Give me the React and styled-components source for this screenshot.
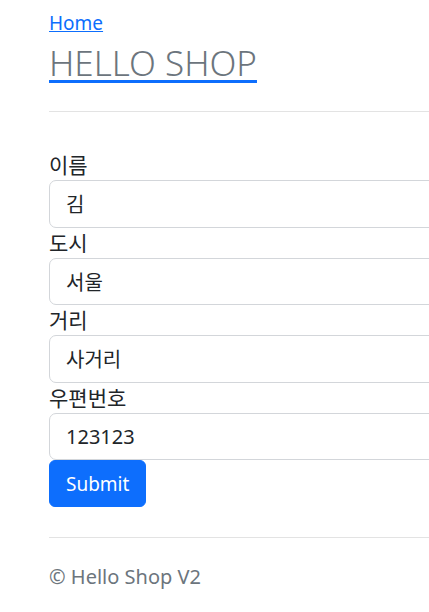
import React from 'react';
import styled, { createGlobalStyle } from 'styled-components';

const GlobalStyle = createGlobalStyle`
  html, body {
    margin: 0;
    padding: 0;
    background: #fff;
    overflow: hidden;
  }
  body {
    font-family: "Noto Sans", "Noto Sans CJK KR", sans-serif;
    font-size: 16px;
    line-height: 1.5;
    color: #212529;
  }
  * {
    box-sizing: border-box;
  }
`;

const Page = styled.div`
  width: 720px;
  padding: 8px 0 0 49px;
`;

const Header = styled.header`
  display: flex;
  flex-direction: column;
  align-items: flex-start;
`;

const HomeLink = styled.a`
  font-size: 19px;
  line-height: 30px;
  color: #0d6efd;
  text-decoration: underline;
`;

const Brand = styled.a`
  font-size: 35px;
  font-weight: 300;
  line-height: 50px;
  color: #6c757d;
  text-decoration: underline;
  text-decoration-color: #0d6efd;
  text-decoration-thickness: 3px;
  text-underline-offset: 4px;
`;

const Rule = styled.hr`
  border: 0;
  border-top: 1px solid #e3e3e3;
  margin: ${(p) => p.$margin || '0'};
`;

const Form = styled.form`
  display: flex;
  flex-direction: column;
  align-items: flex-start;
`;

const Field = styled.div`
  display: flex;
  flex-direction: column;
  width: 100%;
`;

const Label = styled.label`
  font-size: 21px;
  line-height: 30px;
  color: #212529;
`;

const Input = styled.input`
  width: 100%;
  height: 47.5px;
  padding: 8px 16px;
  font-family: inherit;
  font-size: 20px;
  color: #212529;
  background: #fff;
  border: 1px solid #d3d6da;
  border-radius: 7px;
  outline: none;
`;

const SubmitButton = styled.button`
  height: 47px;
  padding: 0 16px;
  font-family: inherit;
  font-size: 19px;
  color: #fff;
  background: #0d6efd;
  border: 1px solid #0d6efd;
  border-radius: 6px;
  cursor: pointer;
`;

const Footer = styled.footer`
  font-size: 20px;
  line-height: 30px;
  color: #6c757d;
  padding-top: 24px;
`;

const fields = [
  { id: 'name', label: '이름', value: '김' },
  { id: 'city', label: '도시', value: '서울' },
  { id: 'street', label: '거리', value: '사거리' },
  { id: 'zipcode', label: '우편번호', value: '123123' },
];

const App = () => {
  return (
    <Page>
      <GlobalStyle />
      <Header>
        <HomeLink href="#">Home</HomeLink>
        <Brand href="#">HELLO SHOP</Brand>
      </Header>
      <Rule $margin="23px 0 38px" />
      <Form onSubmit={(e) => e.preventDefault()}>
        {fields.map((f) => (
          <Field key={f.id}>
            <Label htmlFor={f.id}>{f.label}</Label>
            <Input id={f.id} defaultValue={f.value} />
          </Field>
        ))}
        <SubmitButton type="submit">Submit</SubmitButton>
      </Form>
      <Rule $margin="30px 0 0" />
      <Footer>© Hello Shop V2</Footer>
    </Page>
  );
};

export default App;
